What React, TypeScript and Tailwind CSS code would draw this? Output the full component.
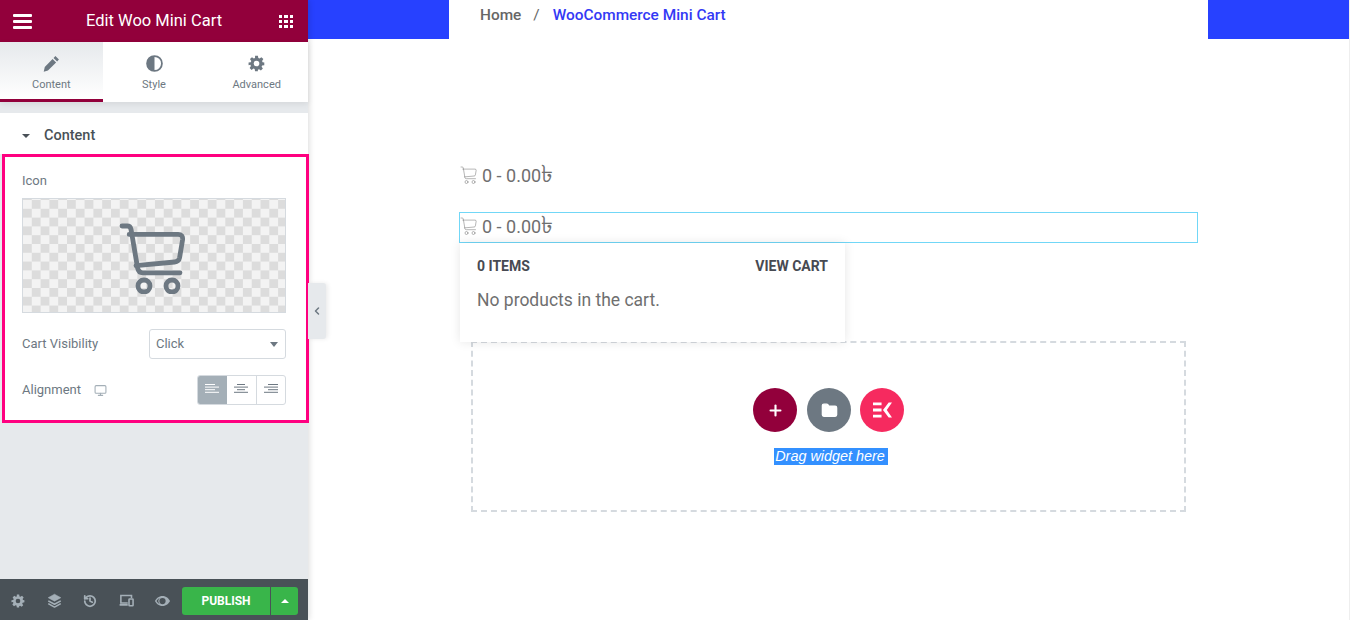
import { Plus, Folder, ChevronLeft, Monitor, History } from 'lucide-react';

const cartPath = 'M2 2h2.6c1 0 1.7.6 1.9 1.6L9.8 23c.3 1.6 1.2 2.4 2.7 2.4H31';

function CartIcon({ className }: { className: string }) {
    return (
        <svg viewBox="0 0 36 36" fill="none" stroke="currentColor" strokeLinecap="round" strokeLinejoin="round" className={className}>
            <path d={cartPath} />
            <path d="M5.6 6.2h24.500c1.600 0 2.400 1 2.200 2.600l-1.500 9c-.3 1.500-1 2.100-2.500 2.200L9 21.800" />
            <circle cx="13" cy="32" r="3" />
            <circle cx="27" cy="32" r="3" />
        </svg>
    );
}

function GearIcon({ className }: { className: string }) {
    return (
        <svg viewBox="0 0 24 24" fill="currentColor" className={className}>
            <path fillRule="evenodd" d="M10 1h4l.6 3.1 1.700.7 2.600-1.800 2.800 2.800-1.800 2.600.7 1.700L23 10.700v3.600l-3.100.6-.7 1.700 1.800 2.600-2.800 2.800-2.600-1.800-1.700.7L14 23h-4l-.6-3.100-1.700-.7-2.600 1.800-2.800-2.800 1.800-2.600-.7-1.700L.8 14.300v-3.600l3.100-.6.7-1.700L2.800 5.800l2.800-2.800 2.600 1.800 1.700-.7zM12 8a4 4 0 1 0 0 8 4 4 0 0 0 0-8z" />
        </svg>
    );
}

function AlignIcon({ lines, color }: { lines: number[][]; color: string }) {
    return (
        <svg viewBox="0 0 14 12" stroke="currentColor" strokeWidth="1" className={`w-[14px] h-[12px] ${color}`}>
            {lines.map((l, i) => (
                <line key={i} x1={l[0]} x2={l[1]} y1={i * 2.6 + 0.5} y2={i * 2.6 + 0.5} />
            ))}
        </svg>
    );
}

function Tab({ label, active, children }: { label: string; active?: boolean; children: React.ReactNode }) {
    return (
        <div className={`flex-1 flex flex-col items-center pt-[12px] border-b-[3px] ${active ? 'border-[#92003b] bg-gradient-to-b from-[#e6e9ec] to-white' : 'border-white bg-white'}`}>
            <div className="h-[18px] flex items-center justify-center text-[#6d7882]">{children}</div>
            <span className="mt-[6px] text-[11px] leading-[14px] text-[#6d7882]">{label}</span>
        </div>
    );
}

function Sidebar() {
    return (
        <aside className="w-[308px] shrink-0 h-[620px] flex flex-col bg-[#e6e9ec] shadow-[1px_0_6px_rgba(0,0,0,0.15)] relative z-10">
            <header className="h-[42px] bg-[#92003b] text-white flex items-center justify-between pl-[13px] pr-[15px]">
                <div className="w-[19px] flex flex-col gap-[3px]">
                    <span className="h-[3px] bg-white rounded-[1px]"></span>
                    <span className="h-[3px] bg-white rounded-[1px]"></span>
                    <span className="h-[3px] bg-white rounded-[1px]"></span>
                </div>
                <h1 className="text-[16.500px] font-normal mr-[3px]">Edit Woo Mini Cart</h1>
                <div className="grid grid-cols-3 gap-[2px] w-[14px]">
                    {Array.from({ length: 9 }).map((_, i) => (
                        <span key={i} className="h-[3px] bg-white"></span>
                    ))}
                </div>
            </header>

            <div className="h-[60px] flex shadow-[0_2px_6px_rgba(0,0,0,0.08)] relative">
                <Tab label="Content" active>
                    <svg viewBox="0 0 24 24" fill="currentColor" className="w-[17px] h-[17px]">
                        <path d="M17.500 1.500l5 5-2.600 2.600-5-5zM13.500 5.500l5 5L7 22l-6 1.500L2.500 17z" />
                    </svg>
                </Tab>
                <Tab label="Style">
                    <svg viewBox="0 0 24 24" className="w-[17px] h-[17px]">
                        <circle cx="12" cy="12" r="10.500" fill="none" stroke="currentColor" strokeWidth="2.500" />
                        <path d="M12 1.500a10.500 10.500 0 0 0 0 21z" fill="currentColor" />
                    </svg>
                </Tab>
                <Tab label="Advanced">
                    <GearIcon className="w-[17px] h-[17px]" />
                </Tab>
            </div>

            <div className="mt-[11px] h-[41px] shrink-0 bg-white flex items-center pl-[22px] gap-[14px] pt-[5px]">
                <span className="w-0 h-0 border-x-[4px] border-x-transparent border-t-[4px] border-t-[#495157]"></span>
                <span className="text-[14.500px] font-medium text-[#495157]">Content</span>
            </div>

            <section className="ml-[2px] w-[307px] h-[269px] border-[3px] border-[#ff0080] bg-white pl-[17px] pr-[20px] pt-[16px]">
                <div className="text-[13px] leading-[16px] text-[#6d7882]">Icon</div>
                <div className="mt-[9px] h-[115px] pt-[4px] border border-[#d5dadf] bg-[conic-gradient(#dcdcdc_25%,#f3f3f3_0_50%,#dcdcdc_0_75%,#f3f3f3_0)] bg-[length:17.600px_17.600px] bg-[position:0_1px] flex items-center justify-center">
                    <CartIcon className="w-[72px] h-[72px] text-[#6d7882] stroke-[2.400]" />
                </div>
                <div className="mt-[16px] flex items-center justify-between">
                    <span className="text-[13px] text-[#6d7882]">Cart Visibility</span>
                    <div className="w-[137px] h-[30px] border border-[#d5dadf] rounded-[3px] flex items-center justify-between pl-[6px] pr-[7px]">
                        <span className="text-[13px] text-[#6d7882]">Click</span>
                        <span className="w-0 h-0 border-x-[4.500px] border-x-transparent border-t-[5px] border-t-[#6d7882]"></span>
                    </div>
                </div>
                <div className="mt-[16px] flex items-center">
                    <span className="text-[13px] text-[#6d7882]">Alignment</span>
                    <Monitor className="w-[13px] h-[13px] ml-[13px] text-[#a4afb7]" />
                    <div className="ml-auto w-[89px] h-[30px] flex border border-[#d5dadf] rounded-[3px] overflow-hidden">
                        <div className="w-[30px] bg-[#a4afb7] flex items-center justify-center -my-px -ml-px">
                            <AlignIcon color="text-white" lines={[[0, 10], [0, 14], [0, 10], [0, 14]]} />
                        </div>
                        <div className="flex-1 border-r border-[#d5dadf] flex items-center justify-center">
                            <AlignIcon color="text-[#6d7882]" lines={[[3, 11], [0, 14], [3, 11], [0, 14]]} />
                        </div>
                        <div className="flex-1 flex items-center justify-center">
                            <AlignIcon color="text-[#6d7882]" lines={[[4, 14], [0, 14], [4, 14], [0, 14]]} />
                        </div>
                    </div>
                </div>
            </section>

            <footer className="mt-auto h-[41px] bg-[#495157] flex items-center pt-[2px] pl-[11px] pr-[10px] text-[#a4afb7]">
                <GearIcon className="w-[14px] h-[14px]" />
                <svg viewBox="0 0 24 24" fill="currentColor" stroke="currentColor" strokeLinejoin="round" className="w-[15px] h-[15px] ml-[22px]">
                    <path d="M12 2l10 5.500-10 5.500L2 7.500z" strokeWidth="1" />
                    <path d="M2 12.500l10 5.500 10-5.500M2 17l10 5.500L22 17" fill="none" strokeWidth="2.500" />
                </svg>
                <History className="w-[14px] h-[14px] ml-[21px]" strokeWidth={3} />
                <svg viewBox="0 0 24 24" fill="none" stroke="currentColor" strokeWidth="2.500" className="w-[15px] h-[15px] ml-[22px]">
                    <path d="M14 16H3V4h17v4M1 19h13" />
                    <rect x="16" y="9.500" width="6.500" height="11" rx="1" />
                </svg>
                <svg viewBox="0 0 24 16" fill="currentColor" className="w-[15px] h-[10px] ml-[21px]">
                    <path fillRule="evenodd" d="M12 0c6 0 10 4 12 8-2 4-6 8-12 8S2 12 0 8c2-4 6-8 12-8zm0 3a5 5 0 1 0 0 10 5 5 0 0 0 0-10zM2.500 8c1.200 2 3 3.800 5 4.800A7 7 0 0 1 7.500 3.200c-2 1-3.800 2.800-5 4.800z" />
                </svg>
                <div className="ml-auto flex h-[28px]">
                    <button className="w-[88px] bg-[#39b54a] text-white text-[12px] font-bold rounded-l-[3px]">PUBLISH</button>
                    <button className="w-[27px] ml-px bg-[#39b54a] rounded-r-[3px] flex items-center justify-center">
                        <span className="w-0 h-0 border-x-[4px] border-x-transparent border-b-[4px] border-b-white"></span>
                    </button>
                </div>
            </footer>

            <div className="absolute left-[308px] top-[283px] w-[18px] h-[56px] bg-[#e6e9ec] rounded-r-[3px] shadow-[2px_0_4px_rgba(0,0,0,0.08)] flex items-center justify-center text-[#6d7882]">
                <ChevronLeft className="w-[12px] h-[12px] mr-[1px]" strokeWidth={3} />
            </div>
        </aside>
    );
}

function CartLine({ className = '' }: { className?: string }) {
    return (
        <div className={`flex items-center h-[28px] text-[18px] text-[#6f6f6f] ${className}`}>
            <CartIcon className="w-[18px] h-[18px] stroke-1 mr-[4px]" />
            <span>0 - 0.00<span className="text-[24px] leading-[24px]">৳</span></span>
        </div>
    );
}

function CircleButton({ color, children }: { color: string; children: React.ReactNode }) {
    return <div className={`w-[44px] h-[44px] rounded-full flex items-center justify-center text-white ${color}`}>{children}</div>;
}

export default function App() {
    return (
        <div className="w-[1350px] h-[620px] flex overflow-hidden bg-white font-['Roboto',sans-serif]">
            <Sidebar />
            <main className="flex-1 flex flex-col border-r border-[#eeeeee]">
                <div className="h-[39px] shrink-0 bg-[#2741ff]">
                    <nav className="w-[759px] h-[39px] ml-[141px] bg-white pl-[31px] pt-[5px] text-[15.400px] font-medium leading-[20px] flex">
                        <span className="text-[#666]">Home</span>
                        <span className="text-[#666] font-normal ml-[12px]">/</span>
                        <span className="text-[#3339f5] ml-[13px]">WooCommerce Mini Cart</span>
                    </nav>
                </div>

                <div className="ml-[151px] w-[739px] mt-[122px]">
                    <CartLine className="pl-px" />
                    <div className="mt-[23px] h-[31px] border border-[#71d7f7]">
                        <CartLine className="-mt-px" />
                    </div>
                    <div className="relative z-10 ml-px w-[385px] h-[99px] bg-white shadow-[0_0_10px_rgba(0,0,0,0.1)] px-[17px] pt-[15px]">
                        <div className="flex justify-between text-[14px] font-bold leading-[16px] text-[#474a52]">
                            <span>0 ITEMS</span>
                            <span>VIEW CART</span>
                        </div>
                        <p className="mt-[14px] text-[17.500px] leading-[24px] text-[#6f6f6f]">No products in the cart.</p>
                    </div>
                    <div className="ml-[12px] w-[715px] h-[171px] -mt-px border-2 border-dashed border-[#d5dadf] flex flex-col items-center pt-[45px]">
                        <div className="flex">
                            <CircleButton color="bg-[#92003b]">
                                <Plus className="w-[17px] h-[17px]" strokeWidth={3} />
                            </CircleButton>
                            <div className="ml-[10px]">
                                <CircleButton color="bg-[#6d7882]">
                                    <Folder className="w-[17px] h-[17px]" fill="currentColor" />
                                </CircleButton>
                            </div>
                            <div className="ml-[9px]">
                                <CircleButton color="bg-[#f62a5f]">
                                    <svg viewBox="0 0 20 16" fill="currentColor" className="w-[19px] h-[16px]">
                                        <path d="M0 0h9v3H0zM0 6.500h9v3H0zM0 13h9v3H0zM10.500 8l6-8h3.500l-5.500 8 5.500 8h-3.500z" />
                                    </svg>
                                </CircleButton>
                            </div>
                        </div>
                        <span className="mt-[16px] ml-[5px] bg-[#3390ff] text-white text-[14.400px] leading-[17px] italic font-['Liberation_Sans',sans-serif] pl-px pr-[3px]">Drag widget here</span>
                    </div>
                </div>
            </main>
        </div>
    );
}
